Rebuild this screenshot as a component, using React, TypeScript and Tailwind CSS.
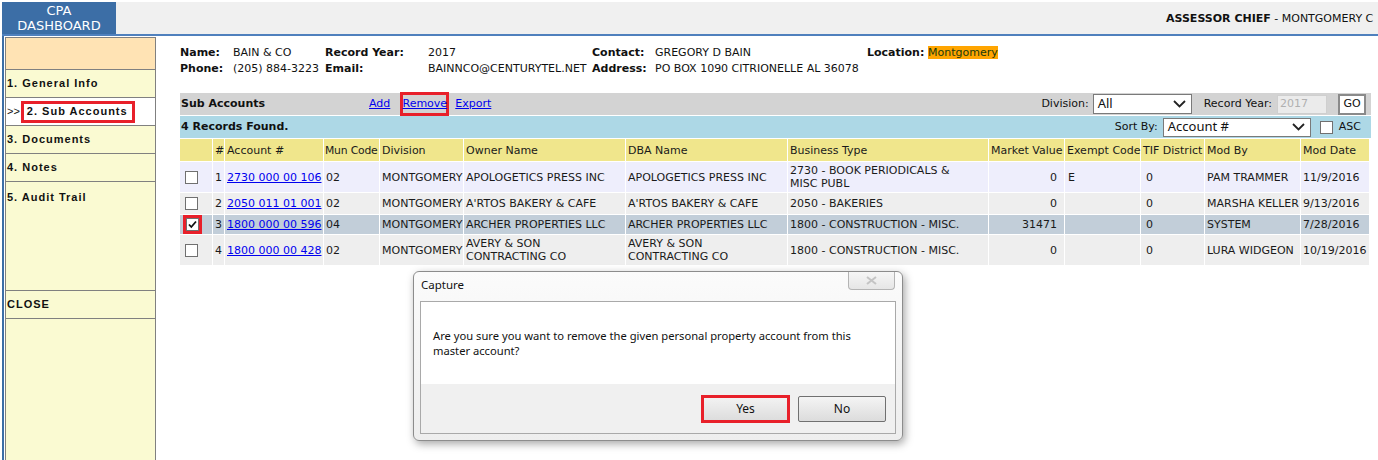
import type { ReactNode } from "react";

type Row = {
  n: number;
  acct: string;
  mun: string;
  owner: ReactNode;
  dba: ReactNode;
  biz: ReactNode;
  mv: string;
  exempt: string;
  modBy: string;
  modDate: string;
  bg: string;
  checked?: boolean;
};

const ROWS: Row[] = [
  {
    n: 1,
    acct: "2730 000 00 106",
    mun: "02",
    owner: "APOLOGETICS PRESS INC",
    dba: "APOLOGETICS PRESS INC",
    biz: (
      <>
        2730 - BOOK PERIODICALS &amp;
        <br />
        MISC PUBL
      </>
    ),
    mv: "0",
    exempt: "E",
    modBy: "PAM TRAMMER",
    modDate: "11/9/2016",
    bg: "bg-[#eeeefc]",
  },
  {
    n: 2,
    acct: "2050 011 01 001",
    mun: "02",
    owner: "A'RTOS BAKERY & CAFE",
    dba: "A'RTOS BAKERY & CAFE",
    biz: "2050 - BAKERIES",
    mv: "0",
    exempt: "",
    modBy: "MARSHA KELLER",
    modDate: "9/13/2016",
    bg: "bg-[#eeeeee]",
  },
  {
    n: 3,
    acct: "1800 000 00 596",
    mun: "04",
    owner: "ARCHER PROPERTIES LLC",
    dba: "ARCHER PROPERTIES LLC",
    biz: "1800 - CONSTRUCTION - MISC.",
    mv: "31471",
    exempt: "",
    modBy: "SYSTEM",
    modDate: "7/28/2016",
    bg: "bg-[#c2ced9]",
    checked: true,
  },
  {
    n: 4,
    acct: "1800 000 00 428",
    mun: "02",
    owner: (
      <>
        AVERY &amp; SON
        <br />
        CONTRACTING CO
      </>
    ),
    dba: (
      <>
        AVERY &amp; SON
        <br />
        CONTRACTING CO
      </>
    ),
    biz: "1800 - CONSTRUCTION - MISC.",
    mv: "0",
    exempt: "",
    modBy: "LURA WIDGEON",
    modDate: "10/19/2016",
    bg: "bg-[#eeeeee]",
  },
];

// measured cell widths of the sub-account grid
const COL_WIDTHS = [32, 11, 98, 55, 83, 161, 161, 200, 75, 75, 63, 95, 68];

const HEADERS = [
  "",
  "#",
  "Account #",
  "Mun Code",
  "Division",
  "Owner Name",
  "DBA Name",
  "Business Type",
  "Market Value",
  "Exempt Code",
  "TIF District",
  "Mod By",
  "Mod Date",
];

function CheckBox({ checked }: { checked?: boolean }) {
  return (
    <span className="flex h-[13px] w-[13px] items-center justify-center border border-[#707070] bg-white">
      {checked && (
        <svg width="11" height="11" viewBox="0 0 11 11">
          <path d="M2 5.5 L4.3 8 L9 2.5" fill="none" stroke="#111" strokeWidth="1.8" />
        </svg>
      )}
    </span>
  );
}

function Chevron() {
  return (
    <svg width="13" height="8" viewBox="0 0 13 8">
      <polyline points="1,1 6.5,6.5 12,1" fill="none" stroke="#222" strokeWidth="1.8" />
    </svg>
  );
}

function SelectBox({ value, className }: { value: string; className: string }) {
  return (
    <div
      className={
        "flex items-center justify-between border border-[#7a7a7a] bg-white pl-[4px] pr-[5px] font-['Noto_Sans'] text-[13px] leading-none text-[#111] " +
        className
      }
    >
      <span className="-mt-[2px]">{value}</span>
      <Chevron />
    </div>
  );
}

function SideItem({ label, className = "" }: { label: string; className?: string }) {
  return (
    <div className={"flex h-[28px] items-center border-t border-[#808080] pl-[1px] " + className}>
      {label}
    </div>
  );
}

export default function App() {
  return (
    <div className="relative h-[460px] w-[1378px] overflow-hidden bg-white pt-[2px] font-['DejaVu_Sans',sans-serif] text-[11px] text-[#111]">
      {/* top bar */}
      <div className="ml-[2px] flex h-[32px] bg-[#f0f0f0]">
        <div className="flex w-[114px] flex-col items-center justify-center bg-[#3c6ea6] text-[13px] leading-[15px] text-white">
          <span>CPA</span>
          <span>DASHBOARD</span>
        </div>
        <div className="flex-1 overflow-hidden whitespace-nowrap pl-[1050px] pt-[10px] leading-[13px]">
          <span className="font-bold">ASSESSOR CHIEF</span> - MONTGOMERY C
        </div>
      </div>
      <div className="ml-[2px] h-[2px] bg-[#4f80bd]" />

      <div className="ml-[2px] flex h-[424px] border-l-[2px] border-[#3c6ea6]">
        {/* sidebar */}
        <nav className="ml-[1px] mt-[1px] flex w-[151px] flex-col border border-b-0 border-[#808080] bg-[#fafad2] font-['Liberation_Sans',sans-serif] text-[11px] font-bold tracking-[1px] text-[#111]">
          <div className="h-[31px] bg-[#ffe3b4]" />
          <SideItem label="1. General Info" />
          <div className="flex h-[28px] items-center border-t border-[#808080] bg-white pl-[1px]">
            <span className="font-normal tracking-[0px]">&gt;&gt;</span>
            <span className="ml-[1px] flex h-[22px] w-[114px] items-center border-[3px] border-[#e8202a] pl-[3px]">
              2. Sub Accounts
            </span>
          </div>
          <SideItem label="3. Documents" />
          <SideItem label="4. Notes" />
          <div className="h-[109px] border-t border-[#808080] pl-[1px] pt-[7px]">5. Audit Trail</div>
          <SideItem label="CLOSE" />
          <div className="flex-1 border-t border-[#808080]" />
        </nav>

        {/* main */}
        <main className="ml-[24px] w-[1191px] pt-[9px]">
          <table className="w-[900px] table-fixed border-collapse leading-[16px]">
            <colgroup>
              <col className="w-[53px]" />
              <col className="w-[92px]" />
              <col className="w-[103px]" />
              <col className="w-[164px]" />
              <col className="w-[63px]" />
              <col className="w-[212px]" />
              <col className="w-[61px]" />
              <col className="w-[152px]" />
            </colgroup>
            <tbody>
              <tr>
                <td className="p-0 font-bold">Name:</td>
                <td className="p-0">BAIN &amp; CO</td>
                <td className="p-0 font-bold">Record Year:</td>
                <td className="p-0">2017</td>
                <td className="p-0 font-bold">Contact:</td>
                <td className="p-0">GREGORY D BAIN</td>
                <td className="p-0 font-bold">Location:</td>
                <td className="p-0">
                  <span className="bg-[#ffa500] text-[#203a0c]">Montgomery</span>
                </td>
              </tr>
              <tr>
                <td className="p-0 font-bold">Phone:</td>
                <td className="whitespace-nowrap p-0">(205) 884-3223</td>
                <td className="p-0 font-bold">Email:</td>
                <td className="whitespace-nowrap p-0">BAINNCO@CENTURYTEL.NET</td>
                <td className="p-0 font-bold">Address:</td>
                <td className="whitespace-nowrap p-0">PO BOX 1090 CITRIONELLE AL 36078</td>
                <td className="p-0" />
                <td className="p-0" />
              </tr>
            </tbody>
          </table>

          {/* sub accounts toolbar */}
          <div className="mt-[16px] flex h-[22px] items-center bg-[#d3d3d3] pr-[5px]">
            <span className="w-[189px] pl-[1px] font-bold">Sub Accounts</span>
            <a className="text-[#0000ee] underline">Add</a>
            <span className="ml-[10px] flex h-[24px] w-[49px] items-center justify-center border-[3px] border-[#e8202a]">
              <a className="text-[#0000ee] underline">Remove</a>
            </span>
            <a className="ml-[6px] text-[#0000ee] underline">Export</a>
            <span className="ml-auto">Division:</span>
            <SelectBox value="All" className="ml-[4px] h-[20px] w-[99px]" />
            <span className="ml-[12px]">Record Year:</span>
            <div className="ml-[5px] flex h-[19px] w-[50px] items-center border border-[#cfcfcf] bg-[#ebebeb] pl-[2px] text-[#b0b0b0]">
              2017
            </div>
            <button className="ml-[11px] flex h-[21px] w-[28px] items-center justify-center border-2 border-[#8a8a8a] bg-white text-[11px] text-[#111]">
              GO
            </button>
          </div>

          {/* records bar */}
          <div className="mt-[1px] flex h-[22px] items-center bg-[#add8e6] pr-[10px]">
            <span className="pl-[1px] font-bold">4 Records Found.</span>
            <span className="ml-auto">Sort By:</span>
            <SelectBox value="Account #" className="ml-[5px] h-[19px] w-[148px]" />
            <span className="ml-[9px]">
              <CheckBox />
            </span>
            <span className="ml-[6px]">ASC</span>
          </div>

          <table className="-ml-[1px] w-[1191px] table-fixed border-separate border-spacing-[1px] leading-[13px] text-[#1a1a1a]">
            <colgroup>
              {COL_WIDTHS.map((w, i) => (
                <col key={i} style={{ width: w }} />
              ))}
            </colgroup>
            <thead>
              <tr className="h-[22px] bg-[#f0e68c]">
                {HEADERS.map((h, i) => (
                  <th
                    key={i}
                    className={
                      i === 3
                        ? "whitespace-nowrap py-0 pl-[1px] pr-0 text-left text-[10.8px] font-normal tracking-[-0.2px]"
                        : "whitespace-nowrap px-[2px] py-0 text-left font-normal"
                    }
                  >
                    {h}
                  </th>
                ))}
              </tr>
            </thead>
            <tbody>
              {ROWS.map((r) => (
                <tr key={r.n} className={r.bg}>
                  <td className={r.checked ? "py-0 pl-[3px]" : "py-[4px] pl-[5px]"}>
                    {r.checked ? (
                      <span className="flex h-[19px] w-[19px] items-center justify-center border-[3px] border-[#e8202a]">
                        <CheckBox checked />
                      </span>
                    ) : (
                      <CheckBox />
                    )}
                  </td>
                  <td className="px-[2px] py-0">{r.n}</td>
                  <td className="whitespace-nowrap px-[2px] py-0">
                    <a className="text-[#0000ee] underline">{r.acct}</a>
                  </td>
                  <td className="px-[2px] py-0">{r.mun}</td>
                  <td className="px-[2px] py-0">MONTGOMERY</td>
                  <td className="px-[2px] py-[2px]">{r.owner}</td>
                  <td className="px-[2px] py-[2px]">{r.dba}</td>
                  <td className="px-[2px] py-[2px]">{r.biz}</td>
                  <td className="py-0 pr-[7px] text-right">{r.mv}</td>
                  <td className="px-[3px] py-0">{r.exempt}</td>
                  <td className="py-0 pl-[5px]">0</td>
                  <td className="whitespace-nowrap px-[2px] py-0">{r.modBy}</td>
                  <td className="whitespace-nowrap px-[2px] py-0">{r.modDate}</td>
                </tr>
              ))}
            </tbody>
          </table>
        </main>
      </div>

      {/* confirm dialog */}
      <div className="absolute left-[413px] top-[271px] h-[170px] w-[490px] rounded-[6px] border border-[#8c8c8c] bg-gradient-to-b from-[#fbfbfb] to-[#eeeeee] font-['Noto_Sans',sans-serif] shadow-[2px_3px_8px_rgba(0,0,0,0.35)]">
        <div className="flex h-[28px] items-start justify-between pl-[7px]">
          <span className="mt-[6px] text-[11.5px] leading-[14px] text-[#111]">Capture</span>
          <div className="mr-[7px] flex h-[18px] w-[47px] items-center justify-center rounded-b-[4px] border border-t-0 border-[#b4b4b4] bg-gradient-to-b from-[#f6f6f6] to-[#e6e6e6]">
            <svg width="11" height="9" viewBox="0 0 11 9">
              <path d="M1 1 L10 8 M10 1 L1 8" stroke="#c4c4c4" strokeWidth="2" />
            </svg>
          </div>
        </div>
        <div className="mx-[6px] mt-[1px] flex h-[133px] flex-col border border-[#a9a9a9]">
          <div className="h-[82px] bg-white pl-[12px] pr-[20px] pt-[26px] text-[11.2px] leading-[15px] text-[#111]">
            Are you sure you want to remove the given personal property account from this master account?
          </div>
          <div className="flex flex-1 items-start justify-end bg-[#f0f0f0] pr-[9px] pt-[11px] text-[12px]">
            <button className="flex h-[28px] w-[89px] items-center justify-center border-[3px] border-[#e8202a] bg-gradient-to-b from-[#f2f2f2] to-[#dddddd] text-[#111]">
              Yes
            </button>
            <button className="ml-[8px] mt-[1px] flex h-[26px] w-[88px] items-center justify-center rounded-[2px] border border-[#707070] bg-gradient-to-b from-[#f4f4f4] to-[#dcdcdc] text-[#111]">
              No
            </button>
          </div>
        </div>
      </div>
    </div>
  );
}
